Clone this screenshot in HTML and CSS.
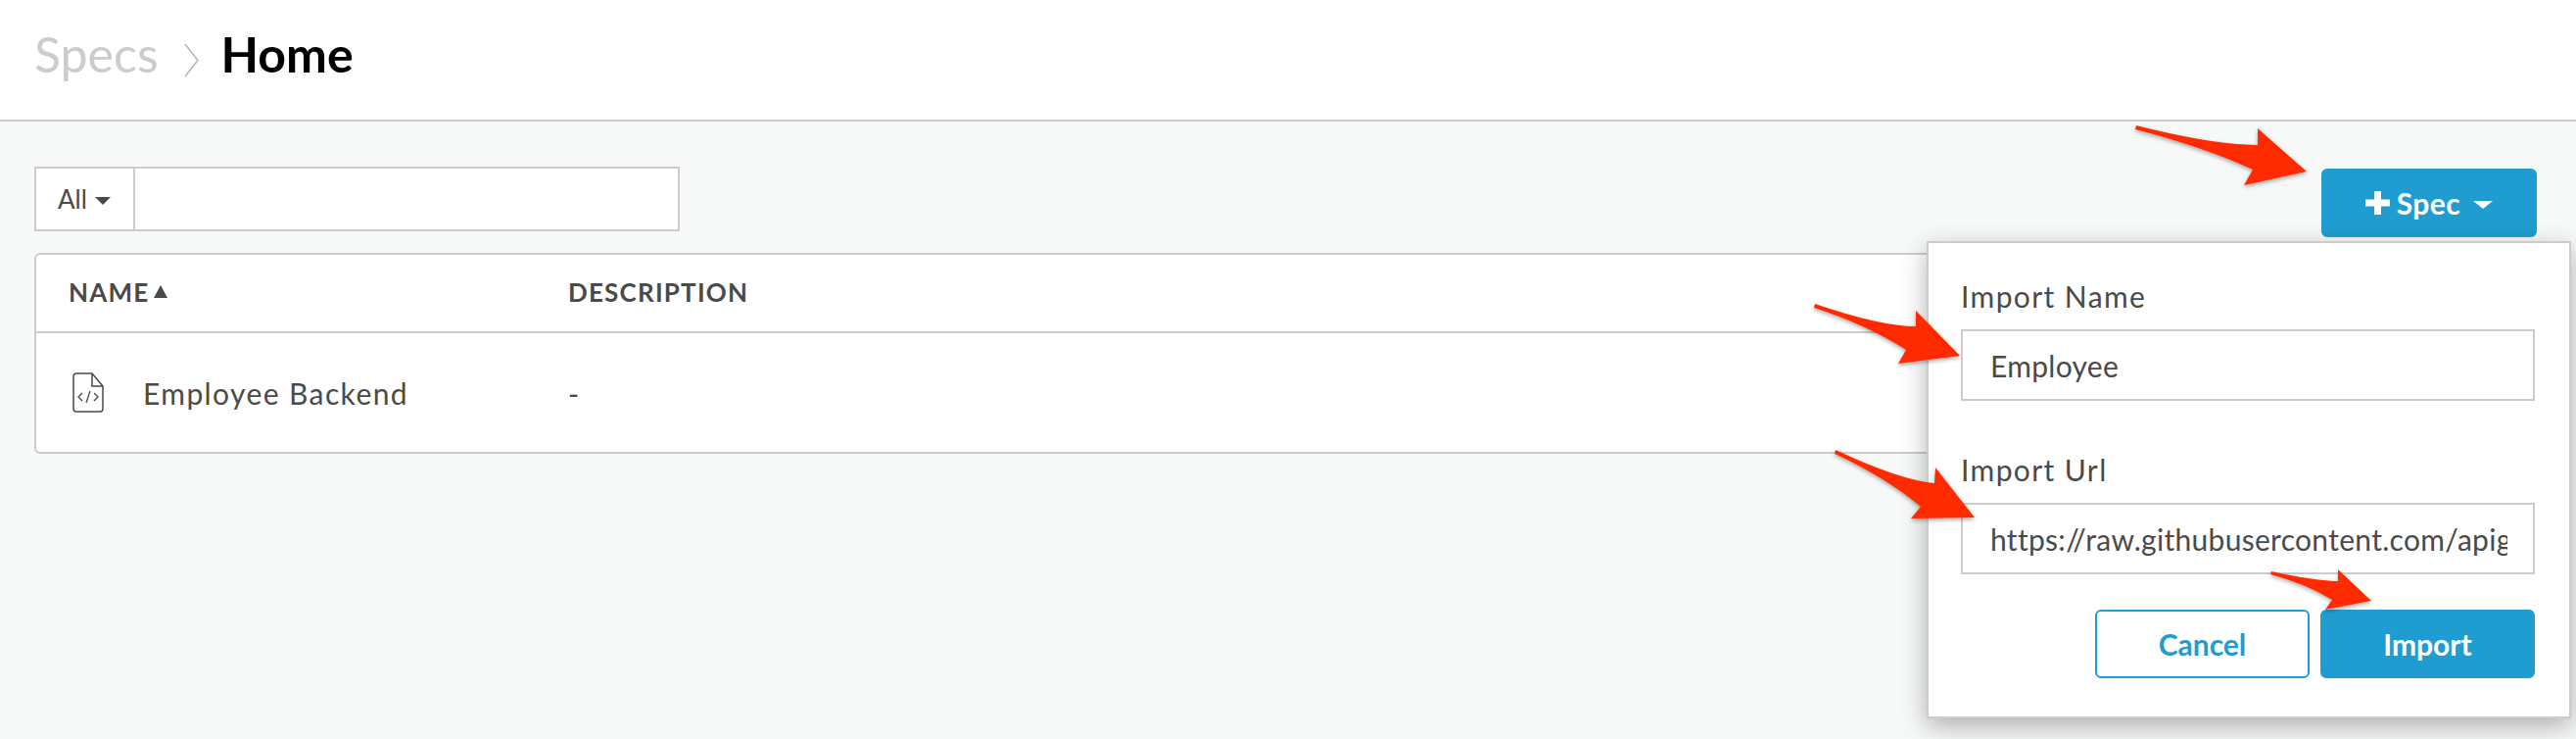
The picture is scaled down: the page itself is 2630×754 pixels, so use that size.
FILE: index.html
```html
<!DOCTYPE html>
<html lang="en">
<head>
  <meta charset="UTF-8">
  <title>Specs - Home</title>
  <link rel="stylesheet" href="styles.css">
</head>
<body>
  <header class="page-header">
    <span class="crumb">Specs</span>
    <svg class="crumb-sep" width="15" height="35" viewBox="0 0 15 35">
      <path d="M1 1 L14 17.5 L1 34" fill="none" stroke="#b5b5b5" stroke-width="1.5"/>
    </svg>
    <h1 class="page-title">Home</h1>
  </header>

  <main class="content">
    <div class="toolbar">
      <div class="search">
        <div class="search-filter">All <span class="caret"></span></div>
        <input class="search-input" type="text">
      </div>
      <div class="add-spec">
        <button class="btn btn-primary btn-spec">
          <svg class="plus" width="25" height="24" viewBox="0 0 25 24"><path d="M9 0h7v8.500h9v7h-9V24H9v-8.500H0v-7h9z" fill="#fff"/></svg>
          Spec <span class="caret caret-white"></span>
        </button>
        <div class="import-popup">
          <label class="field-label">Import Name</label>
          <input class="field-input" type="text" value="Employee">
          <label class="field-label field-label-second">Import Url</label>
          <input class="field-input" type="text" value="https://raw.githubusercontent.com/apigee/api-platform-samples/master/default-proxies/helloworld/openapi/mocktarget3.0.yaml">
          <div class="popup-actions">
            <button class="btn btn-outline">Cancel</button>
            <button class="btn btn-primary">Import</button>
          </div>
        </div>
      </div>
    </div>

    <table class="spec-table">
      <thead>
        <tr>
          <th class="col-name">NAME<span class="sort-up"></span></th>
          <th>DESCRIPTION</th>
        </tr>
      </thead>
      <tbody>
        <tr>
          <td class="col-name">
            <div class="spec-name">
              <svg width="32" height="41" viewBox="0 0 32 41">
                <path d="M4 1 H20 L31 14 V37 a3 3 0 0 1 -3 3 H4 a3 3 0 0 1 -3 -3 V4 a3 3 0 0 1 3 -3 Z M20 1 V14 H31" fill="none" stroke="#4a4a4a" stroke-width="1.5"/>
                <path d="M10 21 L6 25 L10 29 M22 21 L26 25 L22 29 M18 19 L14 31" fill="none" stroke="#4a4a4a" stroke-width="1.300"/>
              </svg>
              <span>Employee Backend</span>
            </div>
          </td>
          <td>-</td>
        </tr>
      </tbody>
    </table>
  </main>

  <!-- annotation arrows on top of the screenshot -->
  <svg class="arrows" width="2630" height="754" viewBox="0 0 2630 754">
    <defs>
      <filter id="arrow-shadow" x="-20%" y="-20%" width="140%" height="140%">
        <feDropShadow dx="0" dy="2" stdDeviation="2" flood-color="#000" flood-opacity="0.35"/>
      </filter>
    </defs>
    <g fill="#ff2b00" filter="url(#arrow-shadow)">
      <path d="M2181 128 Q2260 148 2305 148 L2305 131 L2355 175 L2291 189 L2300 173 Q2250 150 2180 132 Z"/>
      <path d="M1853 310 Q1920 333 1956 333 L1956 317 L2001 363 L1938 371 L1946 357 Q1905 331 1852 314 Z"/>
      <path d="M1874 459 Q1940 490 1975 493 L1976 477 L2016 528 L1951 529 L1961 517 Q1925 487 1873 463 Z"/>
      <path d="M2319 583 Q2360 592 2387 593 L2387 581 L2421 613 L2374 622 L2381 612 Q2355 596 2318 586 Z"/>
    </g>
  </svg>
</body>
</html>
```

FILE: styles.css
```css
* {
  box-sizing: border-box;
}

body {
  margin: 0;
  height: 754px;
  overflow: hidden;
  position: relative;
  font-family: Lato, "Open Sans", sans-serif;
  color: #4a4a4a;
  background-color: #f7f9f8;
}

.page-header {
  display: flex;
  align-items: center;
  height: 124px;
  padding: 0 35px 12px;
  background: #fff;
  border-bottom: 2px solid #ccc;
}

.crumb {
  font-size: 50px;
  color: #ccc;
}

.crumb-sep {
  margin: 12px 23px 0 26px;
}

.page-title {
  margin: 0;
  font-size: 50px;
  font-weight: 700;
  color: #000;
}

.content {
  padding: 46px 40px 0 35px;
}

.toolbar {
  display: flex;
  justify-content: space-between;
  margin-bottom: 16px;
}

.search {
  display: flex;
  width: 659px;
  height: 66px;
  background: #fff;
  border: 2px solid #ccc;
}

.search-filter {
  display: flex;
  align-items: center;
  gap: 8px;
  width: 101px;
  padding-left: 22px;
  font-size: 26px;
  border-right: 2px solid #ccc;
}

.search-input {
  flex: 1;
  border: none;
  background: transparent;
}

.caret {
  display: inline-block;
  border-left: 8px solid transparent;
  border-right: 8px solid transparent;
  border-top: 8px solid #4a4a4a;
  margin-top: 4px;
}

.caret-white {
  border-left-width: 10px;
  border-right-width: 10px;
  border-top-color: #fff;
  margin: 4px 0 0 6px;
}

.add-spec {
  position: relative;
}

.btn {
  height: 70px;
  font-family: inherit;
  font-size: 30px;
  font-weight: 700;
  border-radius: 6px;
  border: 2px solid #1f9dd1;
}

.btn-primary {
  background: #1f9dd1;
  color: #fff;
}

.btn-outline {
  background: #fff;
  color: #1f9dd1;
}

.btn-spec {
  display: flex;
  align-items: center;
  justify-content: center;
  gap: 7px;
  width: 220px;
  margin-top: 2px;
  letter-spacing: 0.5px;
}

.import-popup {
  position: absolute;
  top: 76px;
  right: -35px;
  z-index: 10;
  width: 658px;
  height: 487px;
  padding: 36px 35px 0 33px;
  background: #fff;
  border: 2px solid #ccc;
  box-shadow: 0 8px 24px rgba(0, 0, 0, 0.3);
}

.field-label {
  display: block;
  font-size: 30px;
  line-height: 36px;
  letter-spacing: 1.4px;
  margin-bottom: 16px;
}

.field-label-second {
  margin-top: 52px;
}

.field-input {
  display: block;
  width: 100%;
  height: 73px;
  padding: 0 26px 0 28px;
  font-family: inherit;
  font-size: 30px;
  letter-spacing: 0.3px;
  color: #4a4a4a;
  background: #fff;
  border: 2px solid #ccc;
  border-radius: 0;
}

.popup-actions {
  display: flex;
  justify-content: flex-end;
  gap: 11px;
  margin-top: 36px;
}

.popup-actions .btn {
  width: 219px;
}

.spec-table {
  width: 100%;
  height: 205px;
  border-collapse: separate;
  border-spacing: 0;
  background: #fff;
  border: 2px solid #ccc;
  border-radius: 6px;
}

.spec-table th,
.spec-table td {
  padding: 0;
  text-align: left;
}

.spec-table th {
  height: 80px;
  padding-bottom: 2px;
  font-size: 26px;
  font-weight: 700;
  letter-spacing: 1.2px;
  border-bottom: 2px solid #ccc;
}

.spec-table td {
  font-size: 30px;
  letter-spacing: 1.4px;
}

.spec-table .col-name {
  width: 543px;
  padding-left: 33px;
}

.sort-up {
  display: inline-block;
  margin-left: 5px;
  vertical-align: 4px;
  border-left: 7px solid transparent;
  border-right: 7px solid transparent;
  border-bottom: 13px solid #4a4a4a;
}

.spec-name {
  display: flex;
  align-items: center;
  gap: 40px;
  padding-left: 4px;
}

.arrows {
  position: absolute;
  top: 0;
  left: 0;
  z-index: 20;
  pointer-events: none;
}
```
